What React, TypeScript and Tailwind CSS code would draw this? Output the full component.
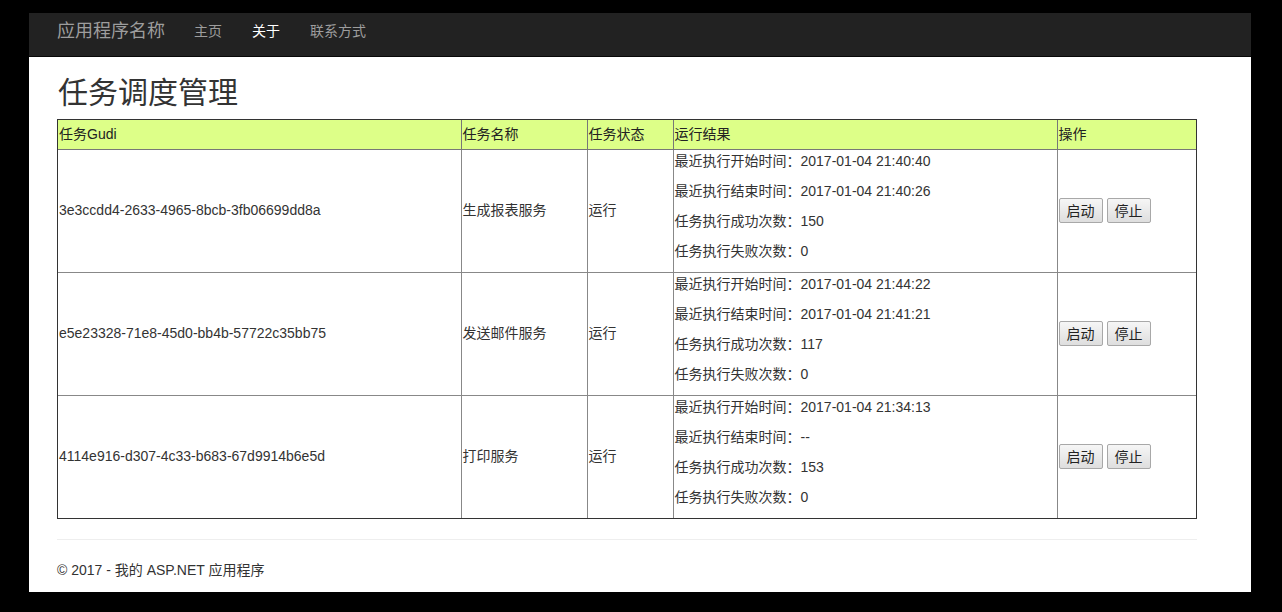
import React from "react";

const rows = [
  {
    id: "3e3ccdd4-2633-4965-8bcb-3fb06699dd8a",
    name: "生成报表服务",
    status: "运行",
    start: "2017-01-04 21:40:40",
    end: "2017-01-04 21:40:26",
    ok: "150",
    fail: "0",
  },
  {
    id: "e5e23328-71e8-45d0-bb4b-57722c35bb75",
    name: "发送邮件服务",
    status: "运行",
    start: "2017-01-04 21:44:22",
    end: "2017-01-04 21:41:21",
    ok: "117",
    fail: "0",
  },
  {
    id: "4114e916-d307-4c33-b683-67d9914b6e5d",
    name: "打印服务",
    status: "运行",
    start: "2017-01-04 21:34:13",
    end: "--",
    ok: "153",
    fail: "0",
  },
];

const font = { fontFamily: '"Liberation Sans", Arial, "Noto Sans CJK SC", sans-serif' };

function Btn({ children }: { children: React.ReactNode }) {
  return (
    <button className="h-[25px] px-[7px] text-[14px] leading-[20px] text-[#222] border border-[#a8a8a8] rounded-[2px] bg-gradient-to-b from-[#f6f6f6] to-[#dedede]">
      {children}
    </button>
  );
}

export default function App() {
  return (
    <div className="w-[1282px] h-[612px] bg-black pt-[13px] pl-[29px]" style={font}>
      <div className="w-[1222px] h-[579px] bg-white flex flex-col">
        <nav className="h-[44px] bg-[#222] border-b border-[#080808] flex items-center pl-[28px] pb-[7px]">
          <span className="text-[18px] text-[#9d9d9d] pr-[14px]">应用程序名称</span>
          <span className="text-[14px] text-[#9d9d9d] px-[15px]">主页</span>
          <span className="text-[14px] text-white px-[15px]">关于</span>
          <span className="text-[14px] text-[#9d9d9d] px-[15px]">联系方式</span>
        </nav>
        <div className="pl-[28px] w-[1168px]">
          <h2 className="text-[30px] leading-[36px] text-[#333] font-normal mt-[18px] mb-[8px] pl-[1px]">任务调度管理</h2>
          <div className="w-[1140px] border border-[#333]">
            <table className="w-[1138px] border-collapse border-hidden text-[14px] text-[#333] table-fixed">
              <colgroup>
                <col className="w-[403px]" />
                <col className="w-[126px]" />
                <col className="w-[86px]" />
                <col className="w-[384px]" />
                <col className="w-[139px]" />
              </colgroup>
              <thead>
                <tr className="bg-[#ddff88] h-[29px]">
                  {["任务Gudi", "任务名称", "任务状态", "运行结果", "操作"].map((h) => (
                    <th key={h} className="border border-[#777] text-left font-normal px-[1px] py-0 leading-[20px] text-[#222]">
                      {h}
                    </th>
                  ))}
                </tr>
              </thead>
              <tbody>
                {rows.map((r) => (
                  <tr key={r.id}>
                    <td className="border border-[#888] p-[1px] align-middle">{r.id}</td>
                    <td className="border border-[#888] p-[1px] align-middle">{r.name}</td>
                    <td className="border border-[#888] p-[1px] align-middle">{r.status}</td>
                    <td className="border border-[#888] p-[1px] align-middle">
                      <div className="flex flex-col leading-[20px]">
                        <p className="mb-[10px]">最近执行开始时间：{r.start}</p>
                        <p className="mb-[10px]">最近执行结束时间：{r.end}</p>
                        <p className="mb-[10px]">任务执行成功次数：{r.ok}</p>
                        <p className="mb-[10px]">任务执行失败次数：{r.fail}</p>
                      </div>
                    </td>
                    <td className="border border-[#888] p-[1px] align-middle">
                      <div className="flex gap-[4px]">
                        <Btn>启动</Btn>
                        <Btn>停止</Btn>
                      </div>
                    </td>
                  </tr>
                ))}
              </tbody>
            </table>
          </div>
          <hr className="mt-[20px] w-[1140px] border-t border-[#eee]" />
          <footer className="mt-[20px] text-[14px] leading-[20px] text-[#333]">© 2017 - 我的 ASP.NET 应用程序</footer>
        </div>
      </div>
    </div>
  );
}
